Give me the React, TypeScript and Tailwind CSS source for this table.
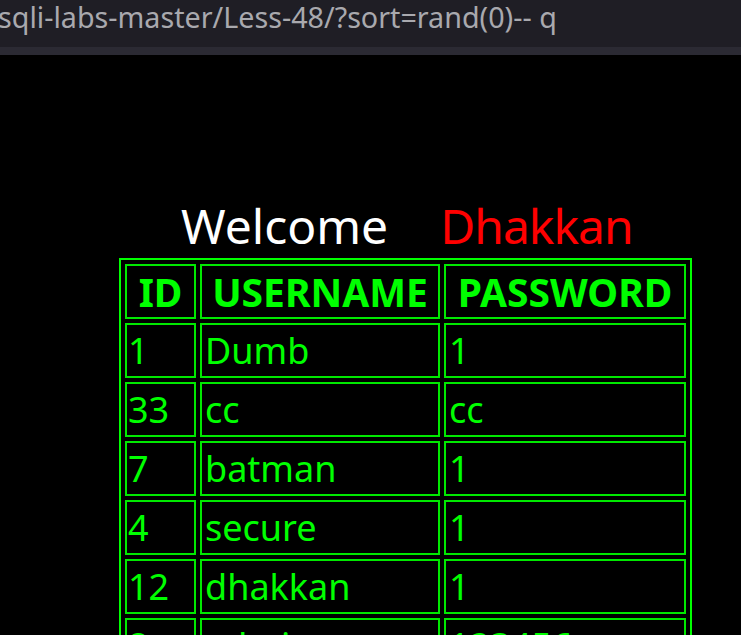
const rows = [
  { id: "1", username: "Dumb", password: "1" },
  { id: "33", username: "cc", password: "cc" },
  { id: "7", username: "batman", password: "1" },
  { id: "4", username: "secure", password: "1" },
  { id: "12", username: "dhakkan", password: "1" },
  { id: "8", username: "admin", password: "123456" },
  { id: "9", username: "admin1", password: "admin1" },
];

const font = { fontFamily: '"Noto Sans", "Open Sans", sans-serif' };

export default function App() {
  return (
    <div className="h-[635px] w-[741px] overflow-hidden bg-black" style={font}>
      <div className="h-[47px] bg-[#1f1e25] pt-[3px]">
        <div className="ml-[-2px] whitespace-nowrap text-[28.7px] leading-none text-[#a9a9ae]">
          sqli-labs-master/Less-48/?sort=rand(0)-- q
        </div>
      </div>
      <div className="h-[8px] bg-[#2b2a33]" />

      <div className="mt-[138px] flex pl-[181px] text-[48px] leading-[65px] whitespace-nowrap">
        <span className="text-white">Welcome</span>
        <span className="ml-[52px] tracking-[-1px] text-[#ff0000]">Dhakkan</span>
      </div>

      <table className="ml-[119px] w-[573px] table-fixed border-separate border-spacing-[4px] border-2 border-[#00ff00] text-[36px] text-[#00ff00]">
        <colgroup>
          <col className="w-[71px]" />
          <col className="w-[240px]" />
          <col className="w-[242px]" />
        </colgroup>
        <thead>
          <tr>
            {["ID", "USERNAME", "PASSWORD"].map((h) => (
              <th
                key={h}
                className="h-[55px] border-2 border-[#00e800] p-0 text-center text-[39px] font-bold leading-[49px] whitespace-nowrap"
              >
                {h}
              </th>
            ))}
          </tr>
        </thead>
        <tbody>
          {rows.map((r) => (
            <tr key={r.id}>
              <td className="h-[55px] border-2 border-[#00e800] px-[1px] py-0 leading-[49px] whitespace-nowrap">{r.id}</td>
              <td className="h-[55px] border-2 border-[#00e800] px-[3px] py-0 leading-[49px] whitespace-nowrap">{r.username}</td>
              <td className="h-[55px] border-2 border-[#00e800] px-[3px] py-0 leading-[49px] whitespace-nowrap">{r.password}</td>
            </tr>
          ))}
        </tbody>
      </table>
    </div>
  );
}
